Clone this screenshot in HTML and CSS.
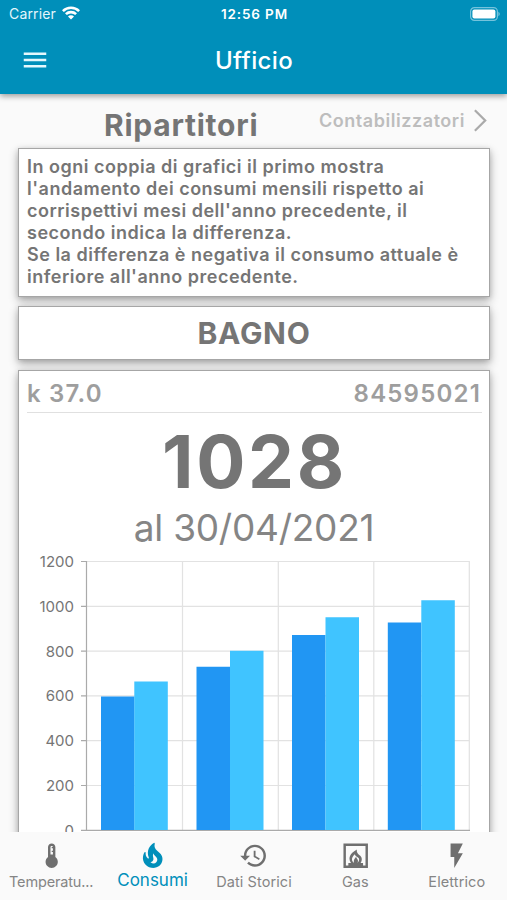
FILE: index.html
```html
<!DOCTYPE html>
<html lang="it">
<head>
<meta charset="utf-8">
<title>Ufficio</title>
<link rel="stylesheet" href="styles.css">
</head>
<body>
<div class="app">
  <header class="header">
    <div class="status">
      <div class="carrier"><span>Carrier</span>
        <svg class="wifi" viewBox="0 0 18 14"><path d="M0 4.300a12.800 12.800 0 0 1 18 0L16.200 6.100a10.200 10.200 0 0 0-14.400 0zM3 7.300a8.500 8.500 0 0 1 12 0L13.200 9.100a6 6 0 0 0-8.400 0zM6 10.400a4.200 4.200 0 0 1 6 0L9 13.500z"/></svg>
      </div>
      <span class="clock">12:56 PM</span>
      <svg class="battery" viewBox="0 0 30 14"><rect x=".6" y=".6" width="26.8" height="12.8" rx="3.8" class="shell"/><rect x="2.4" y="2.4" width="23" height="9.2" rx="2" class="level"/><path d="M28.400 4.700q1.400.8 1.400 2.300t-1.400 2.300z" class="tip"/></svg>
    </div>
    <div class="appbar">
      <svg class="menu" viewBox="0 0 24 24"><path d="M3 18h18v-2H3v2zm0-5h18v-2H3v2zm0-7v2h18V6H3z"/></svg>
      <h1>Ufficio</h1>
    </div>
  </header>

  <main class="content">
    <div class="tabs">
      <h2>Ripartitori</h2>
      <div class="next"><span>Contabilizzatori</span>
        <svg viewBox="0 0 16 26"><path d="M2 2l11 11L2 24"/></svg>
      </div>
    </div>
    <section class="card info">In ogni coppia di grafici il primo mostra<br>l'andamento dei consumi mensili rispetto ai<br>corrispettivi mesi dell'anno precedente, il<br>secondo indica la differenza.<br>Se la differenza è negativa il consumo attuale è<br>inferiore all'anno precedente.</section>
    <section class="card room">BAGNO</section>
    <section class="card meter">
      <div class="ids"><span>k 37.0</span><span class="serial">84595021</span></div>
      <div class="value">1028</div>
      <div class="date">al 30/04/2021</div>
      <svg class="chart" viewBox="0 0 470 290" width="470" height="290">
        <g class="grid">
          <path d="M68 12.500H450M68 57.300H450M68 102.100H450M68 146.900H450M68 191.700H450M68 236.500H450"/>
          <path d="M163.500 12V281M259.300 12V281M354.800 12V281M450.300 12V281"/>
        </g>
        <g class="axis"><path d="M67.500 12V281M62 12.500h5M62 57.300h5M62 102.100h5M62 146.900h5M62 191.700h5M62 236.500h5M62 281.300H451"/></g>
        <g class="previous"><path d="M82 147.600h33.500V281H82zM177.500 117.800H211V281h-33.500zM273 85.900h33.500V281H273zM368.800 73.600h33.500V281h-33.500z"/></g>
        <g class="current"><path d="M115.300 132.500h33.500V281h-33.500zM211 101.700h33.500V281H211zM306.500 68.300H340V281h-33.500zM402.300 51.300h33.500V281h-33.500z"/></g>
        <g class="labels">
          <text x="55" y="18">1200</text><text x="55" y="62.700">1000</text><text x="55" y="107.500">800</text><text x="55" y="152.300">600</text><text x="55" y="197">400</text><text x="55" y="242">200</text><text x="55" y="286.500">0</text>
        </g>
      </svg>
    </section>
  </main>

  <nav class="nav">
    <div class="item"><svg viewBox="0 0 24 24"><path fill-rule="evenodd" d="M15 13V5c0-1.660-1.340-3-3-3S9 3.340 9 5v8c-1.210.910-2 2.370-2 4 0 2.760 2.240 5 5 5s5-2.240 5-5c0-1.630-.790-3.090-2-4zm-4-8c0-.550.450-1 1-1s1 .450 1 1h-1v1h1v2h-1v1h1v2h-2V5z"/></svg><span>Temperatu...</span></div>
    <div class="item active"><svg viewBox="0 0 24 24"><path d="M19.480 12.350c-1.570-4.080-7.160-4.300-5.810-10.230.1-.440-.370-.780-.750-.550C9.290 3.710 6.680 8 8.870 13.620c.180.460-.360.890-.750.590-1.810-1.370-2-3.340-1.840-4.750.060-.520-.620-.770-.910-.340C4.690 10.160 4 11.840 4 14.370c.380 5.600 5.110 7.320 6.810 7.540 2.430.310 5.060-.140 6.950-1.870 2.080-1.930 2.840-5.010 1.720-7.690zm-9.280 5.030c1.440-.350 2.180-1.390 2.380-2.310.330-1.430-.960-2.830-.090-5.090.330 1.870 3.270 3.040 3.270 5.080.080 2.530-2.660 4.700-5.560 2.320z"/></svg><span>Consumi</span></div>
    <div class="item"><svg viewBox="0 0 24 24"><path d="M13 3c-4.970 0-9 4.030-9 9H1l3.890 3.890.070.140L9 12H6c0-3.870 3.130-7 7-7s7 3.130 7 7-3.130 7-7 7c-1.930 0-3.680-.790-4.940-2.060l-1.420 1.420C8.270 19.990 10.510 21 13 21c4.970 0 9-4.030 9-9s-4.030-9-9-9zm-1 5v5l4.280 2.540.720-1.210-3.500-2.080V8H12z"/></svg><span>Dati Storici</span></div>
    <div class="item"><svg viewBox="0 0 24 24"><path fill-rule="evenodd" d="M2 2v20h20V2H2zm2 2h16v16h-2v-2h-2c.630-.840 1-1.870 1-3 0-1.890-1.090-2.850-1.850-3.370C12.200 9.610 13 7 13 7c-6.730 3.570-6.020 7.470-6 8 .030.960.490 2.070 1.230 3H6v2H4V4zm7.300 6.900c-1.500 1.500-2.500 2.900-2.300 4.400.1 1.100.7 1.900 1.600 2.500-.4-1.600 0-2.800 1-3.900l.7-1.100c.4 1.500 1.700 2.200 1.600 3.500 0 .6-.3 1.100-.7 1.500.9-.5 1.600-1.400 1.600-2.700 0-1.900-2.900-1.800-3.500-4.200z"/></svg><span>Gas</span></div>
    <div class="item"><svg viewBox="0 0 24 24"><path d="M7 2v11h3v9l7-12h-4l4-8z"/></svg><span>Elettrico</span></div>
  </nav>
</div>
</body>
</html>
```
FILE: styles.css
```css
* { box-sizing: border-box; }
body { margin: 0; font-family: Inter, "Liberation Sans", sans-serif; color: #757575; background: #fafafa; }
.app { height: 900px; display: flex; flex-direction: column; overflow: hidden; }
.header { flex: none; height: 94px; background: #008fba; color: #fff; box-shadow: 0 2px 6px rgba(0,0,0,.4); z-index: 1; }
.status { height: 28px; display: grid; grid-template-columns: 1fr auto 1fr; align-items: center; padding: 0 7px 0 9px; }
.carrier { display: flex; align-items: center; gap: 6px; font-size: 14px; letter-spacing: .15px; color: #e4f6fc; margin-top: -1px; }
.wifi { width: 18px; height: 14px; fill: #fff; margin-top: -1px; }
.clock { font-size: 13.500px; font-weight: 600; letter-spacing: .85px; margin-top: -1px; }
.battery { width: 30px; height: 14px; justify-self: end; margin-top: -1px; }
.shell { fill: none; stroke: #75c3dc; stroke-width: 1.2; }
.level { fill: #fff; }
.tip { fill: #75c3dc; }
.appbar { height: 64px; display: grid; grid-template-columns: 70px 1fr 70px; align-items: center; }
.menu { width: 30px; height: 30px; margin-left: 20px; fill: #e4f8fd; }
h1 { margin: 0; text-align: center; font-size: 24px; font-weight: 500; letter-spacing: .35px; padding-left: 1px; }
.content { flex: 1; min-height: 0; overflow: hidden; padding: 0 17px 0 18px; display: flex; flex-direction: column; }
.tabs { flex: none; height: 54px; display: flex; align-items: center; padding-left: 86px; }
h2 { margin: 7px 0 0; font-size: 30px; font-weight: 650; letter-spacing: .75px; }
.next { display: flex; align-items: center; margin: -1px 2px 0 auto; gap: 8px; font-size: 18px; font-weight: 600; letter-spacing: .55px; color: #bdbdbd; }
.next svg { width: 15px; height: 25px; fill: none; stroke: #aaa; stroke-width: 2.4; }
.card { flex: none; background: #fff; border: 1px solid #a6a6a6; box-shadow: 0 4px 9px rgba(0,0,0,.3), 0 1px 5px rgba(0,0,0,.12); }
.info { height: 149px; padding: 7px 8px; font-size: 18px; line-height: 22px; font-weight: 630; letter-spacing: .5px; white-space: nowrap; }
.room { height: 54px; margin-top: 9px; text-align: center; font-size: 30px; line-height: 53px; font-weight: 650; letter-spacing: .7px; }
.meter { height: 640px; margin-top: 10px; }
.ids { height: 42px; margin: 0 7px 0 8px; display: flex; align-items: center; justify-content: space-between; border-bottom: 1px solid #e0e0e0; font-size: 24px; font-weight: 600; letter-spacing: 1.200px; color: #9e9e9e; padding-top: 3px; }
.serial { margin-right: 1px; }
.value { height: 98px; line-height: 98px; text-align: center; font-size: 73px; font-weight: 700; letter-spacing: 2.700px; padding-left: 1px; }
.date { height: 38px; line-height: 34px; text-align: center; font-size: 37px; font-weight: 370; letter-spacing: -.25px; color: #858585; }
.chart { display: block; }
.grid path { fill: none; stroke: #e2e2e2; stroke-width: 1.2; }
.axis path { fill: none; stroke: #aaa; stroke-width: 1.2; }
.previous { fill: #2196f3; }
.current { fill: #40c4ff; }
.labels { font-size: 15px; text-anchor: end; fill: #757575; letter-spacing: 0; }
.nav { flex: none; height: 68px; background: #fafafa; display: grid; grid-template-columns: repeat(5, 1fr); z-index: 1; }
.item { display: flex; flex-direction: column; align-items: center; padding: 9px 0 0 1px; font-size: 14.500px; line-height: 20px; letter-spacing: .1px; color: #858585; white-space: nowrap; }
.item:first-child { letter-spacing: -.15px; }
.item svg { width: 29.400px; height: 29.400px; fill: #6f6f6f; margin-bottom: 2px; }
.item.active { font-size: 17px; letter-spacing: 0; color: #008fba; }
.item.active svg { fill: #008fba; margin-bottom: 0; }
```
